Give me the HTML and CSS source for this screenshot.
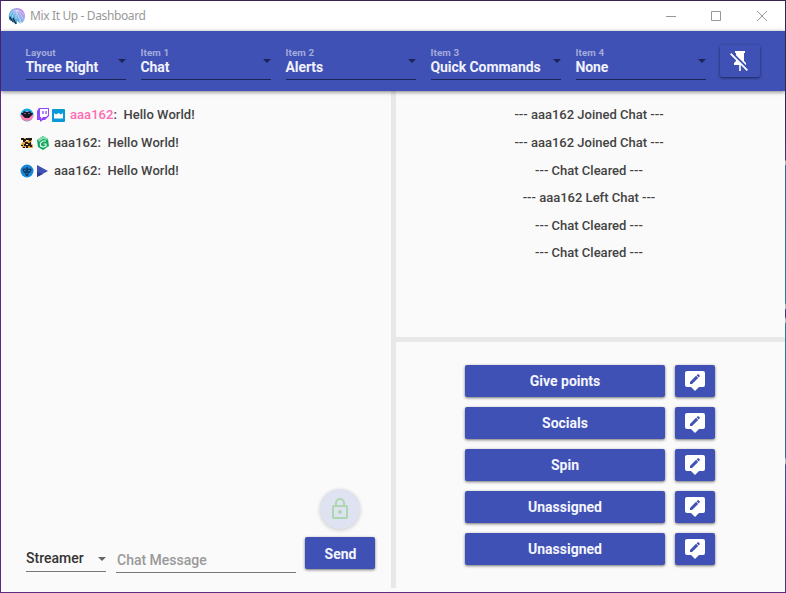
FILE: index.html
```html
<!DOCTYPE html>
<html lang="en">
<head>
<meta charset="utf-8">
<title>Mix It Up - Dashboard</title>
<link rel="stylesheet" href="styles.css">
</head>
<body>
<svg width="0" height="0" class="defs">
  <defs>
    <linearGradient id="logo" x1="0.9" y1="0" x2="0.1" y2="0.8"><stop offset="0" stop-color="#e07be6"/><stop offset=".5" stop-color="#8fb0ea"/><stop offset=".8" stop-color="#4fb0dc"/><stop offset="1" stop-color="#1d4a78"/></linearGradient>
    <symbol id="edit" viewBox="0 0 24 24"><path fill="#fff" fill-rule="evenodd" d="M4 2h16a2 2 0 0 1 2 2v12a2 2 0 0 1-2 2h-4l-4 4-4-4H4a2 2 0 0 1-2-2V4c0-1.100.9-2 2-2zm3 10.960V15h2.040l6.100-6.120-2.040-2.040L7 12.960zm9.730-5.670a.55.55 0 0 0 0-.77l-1.250-1.250a.55.55 0 0 0-.77 0l-1.070 1.070 2.040 2.040 1.050-1.090z"/></symbol>
  </defs>
</svg>
<div class="window">
  <header class="titlebar">
    <svg class="app-logo" width="18" height="18" viewBox="0 0 18 18"><path fill="url(#logo)" d="M1 11C0 5 4 1 9 1c5 0 8 4 8 8 0 3-1 5-3 7l-3-3 2 4-4-3 0 3-3-1-2-3-1 1-2-2z"/><path d="M2 9c1-4 3-5 6-6M4 12c0-4 2-6 5-9M8 12c0-4 0-6 1-9M13 14c-3-4-4-8-4-11M15 12c-2-4-4-7-6-9M16 8c-2-3-4-4-7-5" stroke="#dceeff" stroke-width=".6" fill="none"/><path d="M2 10l3 5M5 11l3 6" stroke="#16354d" stroke-width="1.300"/></svg>
    <span class="title">Mix It Up - Dashboard</span>
    <svg class="controls" width="110" height="20" viewBox="0 0 110 20" fill="none" stroke="#999"><path d="M5 10.500h10M50.500 5.500h9v9h-9zM96 5l10 10M106 5L96 15"/></svg>
  </header>
  <nav class="toolbar">
    <div class="field narrow"><label>Layout</label><span>Three Right</span></div>
    <div class="field"><label>Item 1</label><span>Chat</span></div>
    <div class="field"><label>Item 2</label><span>Alerts</span></div>
    <div class="field"><label>Item 3</label><span>Quick Commands</span></div>
    <div class="field"><label>Item 4</label><span>None</span></div>
    <button class="pin" aria-label="Unpin"><svg width="24" height="24" viewBox="0 0 24 24"><path fill="#fff" d="M2 5.270L3.280 4 20 20.720 18.730 22l-5.930-5.930V22h-1.600v-6H6v-2l2-2v-.73l-6-6zM16 12l2 2v2h-.18L8 6.180V4H7V2h10v2h-1v8z"/></svg></button>
  </nav>
  <main class="content">
    <section class="chat">
      <div class="messages">
        <div class="message">
          <svg width="14" height="14" viewBox="0 0 14 14"><circle cx="7" cy="7" r="6.500" fill="#18a8df"/><path d="M.6 7h12.800c-.5 8-12.300 8-12.800 0" fill="#ff7eab"/><path d="M1 5l2 0 1-2 2 1h2l2-1 1 2 2 0-1 2-2 2-1 1H5L4 9 2 7z" fill="#171829"/><path d="M4.500 5.500h1M8.500 5.500h1M6.500 3.500h1" stroke="#ff9cc0" fill="none"/></svg>
          <svg width="14" height="14" viewBox="0 0 14 14"><path fill="#9146ff" d="M3 0h10v8l-4 4H7l-3 2v-2H1V3z"/><path fill="#fff" d="M4 1h8v6l-2 2H7l-2 2V9H4z"/><path d="M7 3v3M10 3v3" stroke="#9146ff" stroke-width="1.300"/></svg>
          <svg width="13" height="13" viewBox="0 0 13 13"><rect width="13" height="13" rx="1" fill="#0899d6"/><path fill="#fff" d="M2 4l2 1.500L6.500 4 9 5.500 11 4v5.500H2z"/></svg>
          <span><b>aaa162</b>:&nbsp; Hello World!</span>
        </div>
        <div class="message">
          <svg width="14" height="14" viewBox="0 0 14 14"><path fill="#e8a33a" d="M2 2h10v2l-1 3 2 2v3H9L7 11l-3 1H2V9H1V8l2-2z"/><path fill="#211b19" d="M1 2h3v1h2V2h6v2h-1v1H9V4H7v1H5v1H3V4H1zM5 6h3v1h2V6h1v3h1v2h-2v-1H8v2H6v-2H4V8h1zM1 9h2v1H1zM3 11h2v1H3z"/><path fill="#fff0bd" d="M6 4h2v1H6zM6 8h2v1H6z"/></svg>
          <svg width="14" height="14" viewBox="0 0 14 14"><path fill="#12a65c" d="M7 0l5 3 1 7-6 4-5-3L1 4z"/><path fill="#83dfb0" d="M7 0L2 3l1 3 4-3 4 1 1-1z"/><path d="M10 5H7L4.500 7v3L7 11l3-1V8H7.500" stroke="#e2fff0" stroke-width="1.200" fill="none"/></svg>
          <span>aaa162:&nbsp; Hello World!</span>
        </div>
        <div class="message">
          <svg width="14" height="14" viewBox="0 0 14 14"><circle cx="7" cy="7" r="6.500" fill="#1687dd"/><path fill="#14406c" d="M2 5h1l1-1 2 1V3h2v2l2-1 1 1h1L11 7l-1 2-1 0-1 3H6L5 9 4 9 3 7z"/><path d="M4 6.500h1.500M8.500 6.500H10M6.500 9.500h1" stroke="#1e92e6"/></svg>
          <svg width="14" height="14" viewBox="0 0 14 14"><path fill="#3f51b5" d="M1 1l11 6-11 6z"/><path fill="#2e3b94" d="M1 13V8l6 2z"/></svg>
          <span>aaa162:&nbsp; Hello World!</span>
        </div>
      </div>
      <div class="lock"><svg width="24" height="24" viewBox="0 0 24 24"><path fill="#acd8b0" d="M12 17a2 2 0 1 1 0-4 2 2 0 0 1 0 4zm6 3V10H6v10h12zm0-12a2 2 0 0 1 2 2v10a2 2 0 0 1-2 2H6a2 2 0 0 1-2-2V10c0-1.110.9-2 2-2h1V6a5 5 0 0 1 10 0v2h1zm-6-5a3 3 0 0 0-3 3v2h6V6a3 3 0 0 0-3-3z"/></svg></div>
      <div class="composer">
        <div class="sender">Streamer</div>
        <div class="entry">Chat Message</div>
        <button class="send">Send</button>
      </div>
    </section>
    <div class="split-v"></div>
    <div class="side">
      <section class="alerts">
        <p>--- aaa162 Joined Chat ---</p><p>--- aaa162 Joined Chat ---</p><p>--- Chat Cleared ---</p><p>--- aaa162 Left Chat ---</p><p>--- Chat Cleared ---</p><p>--- Chat Cleared ---</p>
      </section>
      <div class="split-h"></div>
      <section class="commands">
        <button>Give points</button><button aria-label="Edit"><svg width="24" height="24"><use href="#edit"/></svg></button>
        <button>Socials</button><button aria-label="Edit"><svg width="24" height="24"><use href="#edit"/></svg></button>
        <button>Spin</button><button aria-label="Edit"><svg width="24" height="24"><use href="#edit"/></svg></button>
        <button>Unassigned</button><button aria-label="Edit"><svg width="24" height="24"><use href="#edit"/></svg></button>
        <button>Unassigned</button><button aria-label="Edit"><svg width="24" height="24"><use href="#edit"/></svg></button>
      </section>
    </div>
  </main>
</div>
</body>
</html>
```
FILE: styles.css
```css
* { box-sizing: border-box; }
body { margin: 0; font: 500 13px/18px Roboto, sans-serif; color: #434343; overflow: hidden; }
.defs { position: absolute; }
svg { display: block; flex: none; }
.window { position: relative; width: 786px; height: 593px; border: 1px solid #5b2c83; border-top-color: #3b2450; border-right-color: #3c3065; display: flex; flex-direction: column; background: #fafafa; }
.window::after { content: ""; position: absolute; top: 0; bottom: 0; right: -1px; width: 1px; background: linear-gradient(#32264f 0 110px, #42337f 159px, #b5bcc4 160px 163px, #34669a 165px, #2d7d93 302px, #b5bcc4 304px 307px, #42337f 309px 316px, #b5bcc4 318px 321px, #2d7d93 323px, #34669a 456px, #b5bcc4 459px 462px, #41519a 464px, #42337f 540px); }
.titlebar { height: 30px; flex: none; background: #fff; display: flex; align-items: center; padding: 0 14px 0 7px; }
.title { flex: 1; margin-left: 4px; color: #999; font: 400 12px/18px "Noto Sans", sans-serif; letter-spacing: -.37px; }
.toolbar { height: 60px; flex: none; background: #3f51b5; display: flex; gap: 15px; padding: 12px 24px 0 25px; box-shadow: 0 1px 4px rgba(0,0,0,.5); position: relative; }
.field { width: 130px; height: 37px; padding-top: 4px; border-bottom: 1px solid #1b2456; position: relative; color: #f1f2fc; }
.field.narrow { width: 100px; }
.field label { display: block; margin-left: -.5px; font-size: 9.800px; line-height: 12px; letter-spacing: .1px; font-weight: 700; color: #a3abdc; }
.field span { display: block; margin-left: -.6px; font-size: 14px; line-height: 16px; font-weight: 700; letter-spacing: -.06px; white-space: nowrap; }
.field::after, .sender::after { content: ""; position: absolute; right: 0; top: 16px; border: 4px solid transparent; border-top-color: #1b2456; border-bottom: 0; }
button { font: 700 14px/20px Roboto, sans-serif; color: #f4f5fd; background: #3f51b5; border: 0; border-radius: 2px; padding: 0; display: flex; align-items: center; justify-content: center; box-shadow: 0 1px 3px rgba(0,0,0,.55); }
.pin { width: 40px; height: 32px; margin: 2px 0 0 -1px; }
.content { flex: 1; min-height: 0; display: flex; }
.chat { width: 389.5px; display: flex; flex-direction: column; }
.messages { padding: 10px 18.5px; flex: 1; }
.message { height: 28px; display: flex; align-items: center; gap: 2px; }
.message span { margin-left: 2.500px; white-space: nowrap; letter-spacing: .04px; }
.message b { font-weight: 500; color: #ff69b4; margin-left: 1px; }
.lock { width: 40px; height: 40px; border-radius: 50%; background: #dfe2f0; margin: 0 0 8px 319px; display: grid; place-items: center; box-shadow: 0 1px 4px rgba(0,0,0,.2); }
.lock svg { margin-left: .5px; }
.composer { display: flex; padding: 0 0 19px 25px; height: 55px; }
.sender { position: relative; width: 80px; height: 35px; padding-top: 12px; border-bottom: 1px solid #777; font-size: 14px; color: #333; }
.sender::after { top: 20px; border-top-color: #666; }
.entry { width: 180px; height: 36px; margin-left: 10px; padding: 14px 0 0 1px; border-bottom: 1px solid #777; font-size: 14px; color: #999; }
.send { width: 70px; height: 32px; margin-left: 9px; padding: 2px 0 0 1px; }
.split-v { width: 5px; background: #e8e8e8; margin-bottom: 4px; }
.side { flex: 1; display: flex; flex-direction: column; }
.alerts { height: 246px; padding: 10.200px 2.500px 0 0; text-align: center; }
.alerts p { margin: 0; height: 27.650px; line-height: 28px; }
.alerts p:nth-child(3) { padding-top: .3px; }
.split-h { height: 5px; background: #e8e8e8; }
.commands { display: grid; grid-template-columns: 200px 40px; grid-auto-rows: 32px; gap: 10px; justify-content: center; padding: 23px 1.5px 0 0; }
.commands button:nth-child(odd) { padding-left: 1px; }
```
